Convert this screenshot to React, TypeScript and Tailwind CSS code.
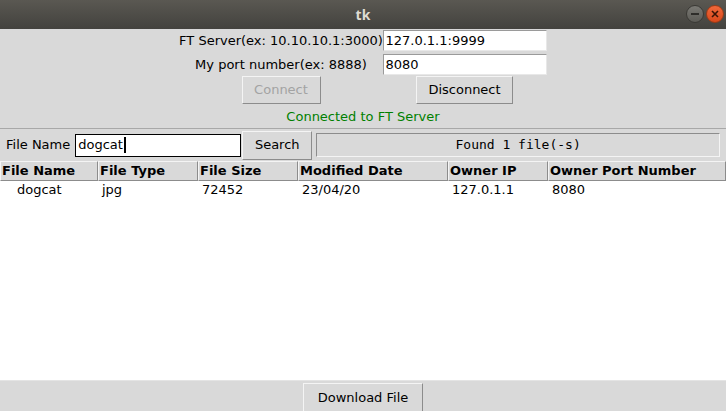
import React from "react";

const FONT = { fontFamily: '"DejaVu Sans", sans-serif' };

const COLUMNS = [
  { title: "File Name", width: "w-[98px]" },
  { title: "File Type", width: "w-[100px]" },
  { title: "File Size", width: "w-[100px]" },
  { title: "Modified Date", width: "w-[150px]" },
  { title: "Owner IP", width: "w-[100px]" },
  { title: "Owner Port Number", width: "flex-1" },
];

const ROWS = [
  { name: "dogcat", type: "jpg", size: "72452", date: "23/04/20", ip: "127.0.1.1", port: "8080" },
];

function TkButton({
  children,
  disabled,
  className = "",
}: {
  children: React.ReactNode;
  disabled?: boolean;
  className?: string;
}) {
  return (
    <button
      type="button"
      className={`flex shrink-0 items-center justify-center border border-t-[#f4f4f4] border-l-[#f4f4f4] border-b-[#8c8c8c] border-r-[#8c8c8c] bg-[#d9d9d9] text-[13px] ${
        disabled ? "text-[#a3a3a3]" : "text-[#000]"
      } ${className}`}
      style={FONT}
    >
      {children}
    </button>
  );
}

function Entry({ value, className = "", focused }: { value: string; className?: string; focused?: boolean }) {
  return (
    <div
      className={`flex shrink-0 items-center bg-white px-[2px] text-[13px] text-black ${
        focused ? "border border-black" : "border border-t-[#9a9a9a] border-l-[#9a9a9a] border-b-[#e8e8e8] border-r-[#e8e8e8]"
      } ${className}`}
      style={FONT}
    >
      <span>{value}</span>
      {focused && <span className="ml-[1px] inline-block h-[16px] w-[2px] bg-black" />}
    </div>
  );
}

export default function App() {
  return (
    <div className="flex h-[411px] w-[726px] flex-col overflow-hidden bg-[#d9d9d9]" style={FONT}>
      {/* window title bar */}
      <div className="relative flex h-[29px] shrink-0 items-center justify-center bg-gradient-to-b from-[#5a5852] to-[#43423e]">
        <span className="text-[14px] font-bold text-[#dfdbd2]" style={{ fontFamily: '"Noto Sans", sans-serif' }}>
          tk
        </span>
        <div className="absolute right-[2px] top-[5px] flex items-center gap-[2px]">
          <div className="flex h-[18px] w-[18px] items-center justify-center rounded-full border border-[#3a3935] bg-gradient-to-b from-[#7a7974] to-[#5c5b56]">
            <div className="h-[2px] w-[8px] bg-[#2e2d2a]" />
          </div>
          <div className="flex h-[18px] w-[18px] items-center justify-center rounded-full border border-[#9c3a16] bg-gradient-to-b from-[#f0683a] to-[#d9481a]">
            <svg width="8" height="8" viewBox="0 0 8 8">
              <path d="M1 1L7 7M7 1L1 7" stroke="#3a1406" strokeWidth="1.6" />
            </svg>
          </div>
        </div>
      </div>

      {/* connection form */}
      <div className="flex shrink-0 flex-col items-center pt-[1px]">
        <div className="grid grid-cols-[203px_164px] gap-y-[3px]">
          <div className="flex h-[21px] items-center justify-center whitespace-nowrap text-[13px] text-black">
            FT Server(ex: 10.10.10.1:3000)
          </div>
          <Entry value="127.0.1.1:9999" className="h-[21px]" />
          <div className="flex h-[21px] items-center justify-center whitespace-nowrap text-[13px] text-black">
            My port number(ex: 8888)
          </div>
          <Entry value="8080" className="h-[21px]" />
        </div>
        <div className="mt-[1px] grid grid-cols-[203px_164px]">
          <div className="flex justify-center">
            <TkButton disabled className="h-[28px] w-[79px]">
              Connect
            </TkButton>
          </div>
          <div className="flex justify-center">
            <TkButton className="h-[28px] w-[97px]">Disconnect</TkButton>
          </div>
        </div>
        <div className="flex h-[24px] items-center pt-[1px] text-[13px] text-[#008000]">Connected to FT Server</div>
      </div>

      {/* search row */}
      <div className="flex h-[33px] shrink-0 items-center border-t border-t-[#a8a8a8] pl-[6px] pr-[6px]">
        <span className="whitespace-nowrap text-[13px] text-black">File Name</span>
        <Entry value="dogcat" focused className="ml-[5px] h-[23px] w-[166px]" />
        <TkButton className="ml-[1px] h-[29px] w-[70px]">Search</TkButton>
        <div
          className="ml-[4px] flex h-[24px] flex-1 items-center justify-center border border-t-[#8c8c8c] border-l-[#8c8c8c] border-b-[#f4f4f4] border-r-[#f4f4f4] text-[13px] text-black"
          style={{ fontFamily: '"DejaVu Sans Mono", monospace' }}
        >
          Found 1 file(-s)
        </div>
      </div>

      {/* results table */}
      <div className="flex flex-1 flex-col bg-white">
        <div className="flex h-[20px] shrink-0 bg-[#d9d9d9]">
          {COLUMNS.map((c) => (
            <div
              key={c.title}
              className={`${c.width} flex items-center whitespace-nowrap border border-t-[#f4f4f4] border-l-[#f4f4f4] border-b-[#8c8c8c] border-r-[#8c8c8c] pl-[1px] text-[13px] font-bold text-black`}
            >
              {c.title}
            </div>
          ))}
        </div>
        {ROWS.map((r) => (
          <div key={r.name} className="flex h-[18px] items-center text-[13px] text-black">
            <div className="w-[98px] pl-[17px]">{r.name}</div>
            <div className="w-[100px] pl-[4px]">{r.type}</div>
            <div className="w-[100px] pl-[4px]">{r.size}</div>
            <div className="w-[150px] pl-[4px]">{r.date}</div>
            <div className="w-[100px] pl-[4px]">{r.ip}</div>
            <div className="flex-1 pl-[4px]">{r.port}</div>
          </div>
        ))}
      </div>

      {/* bottom bar */}
      <div className="flex h-[31px] shrink-0 justify-center border-t border-t-[#e4e4e4] pt-[2px]">
        <TkButton className="h-[30px] w-[120px]">Download File</TkButton>
      </div>
    </div>
  );
}
